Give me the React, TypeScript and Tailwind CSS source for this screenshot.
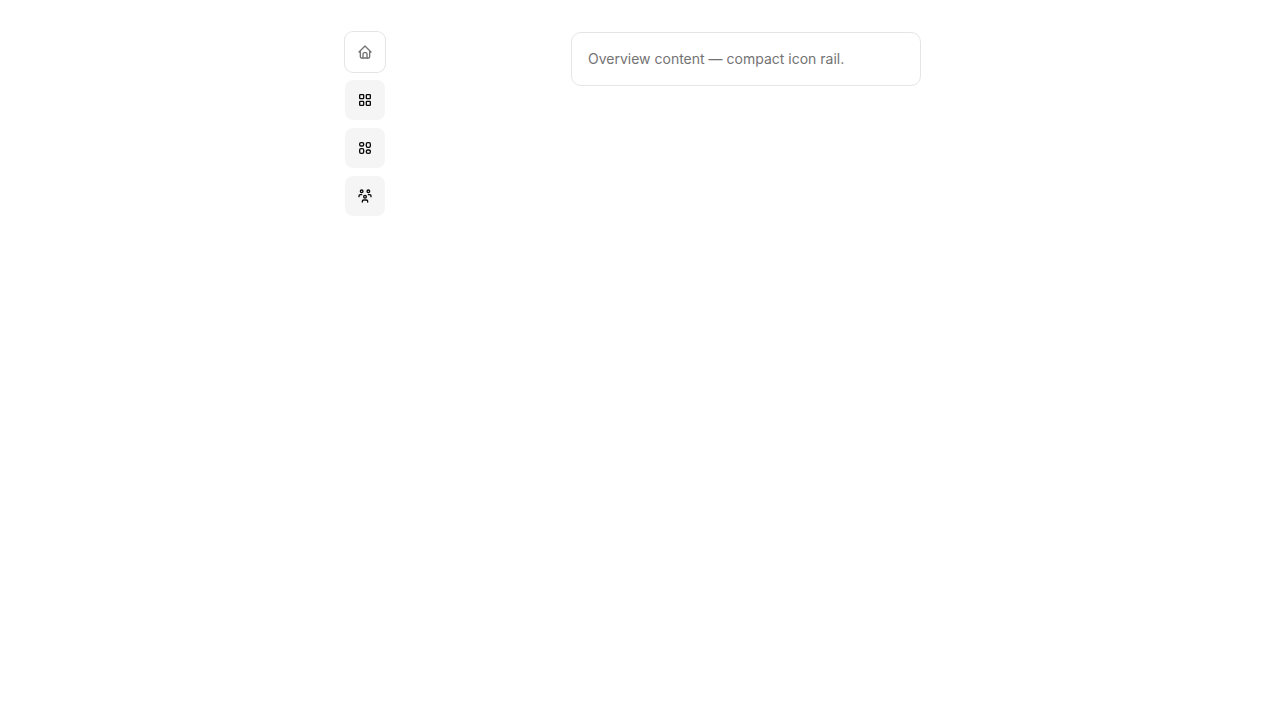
import { useState } from "react";
import clsx from "clsx";
import { TbHome, TbLayout2, TbLayoutGrid, TbUsersGroup } from "react-icons/tb";

const tabs = [
  { id: "overview", label: "Overview", icon: TbHome, content: "Overview content — compact icon rail." },
  { id: "projects", label: "Projects", icon: TbLayoutGrid, content: "Projects content." },
  { id: "layouts", label: "Layouts", icon: TbLayout2, content: "Layouts content." },
  { id: "team", label: "Team", icon: TbUsersGroup, content: "Team content." },
];

export default function App() {
  const [activeId, setActiveId] = useState("overview");
  const active = tabs.find((tab) => tab.id === activeId) ?? tabs[0];

  return (
    <main className="min-h-screen bg-white py-8 pr-[14px] font-['Inter',sans-serif] text-sm">
      <div className="mx-auto flex max-w-xl items-start justify-between">
        <div role="tablist" aria-orientation="vertical" className="flex flex-col gap-2">
          {tabs.map(({ id, label, icon: Icon }) => (
            <button
              key={id}
              id={`tab-${id}`}
              type="button"
              role="tab"
              aria-label={label}
              aria-selected={id === activeId}
              aria-controls="rail-panel"
              onClick={() => setActiveId(id)}
              className={clsx(
                "flex size-10 items-center justify-center rounded-lg",
                id === activeId
                  ? "bg-white text-neutral-500 ring-1 ring-neutral-200"
                  : "bg-neutral-100 text-neutral-950",
              )}
            >
              <Icon className="size-4" aria-hidden />
            </button>
          ))}
        </div>

        <div
          id="rail-panel"
          role="tabpanel"
          aria-labelledby={`tab-${active.id}`}
          className="w-[350px] rounded-[10px] border border-neutral-200 p-4 text-neutral-500"
        >
          <p>{active.content}</p>
        </div>
      </div>
    </main>
  );
}
